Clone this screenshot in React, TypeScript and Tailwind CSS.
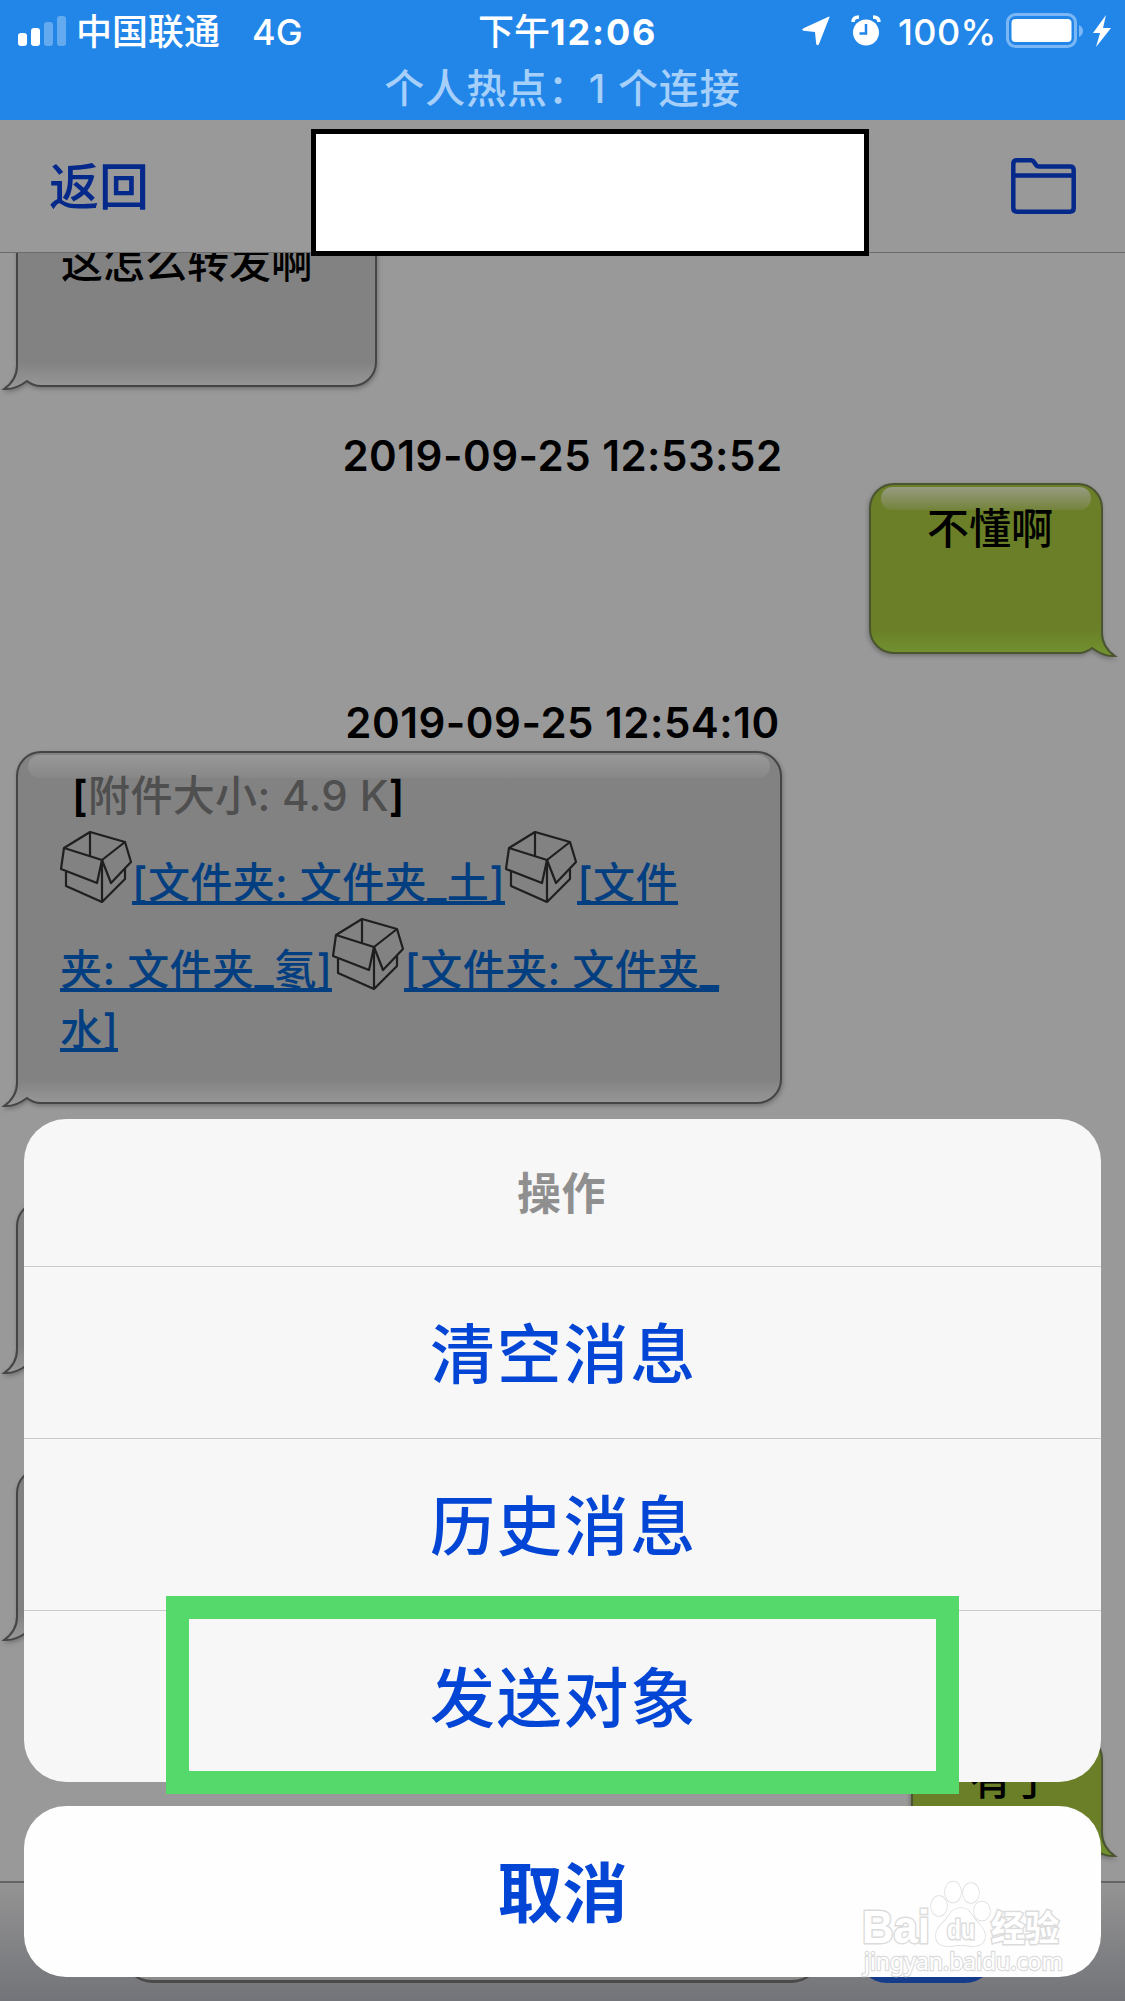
import React from 'react';

interface BubbleProps {
  width: number;
  height: number;
  tone: 'gray' | 'green';
  className?: string;
  children?: React.ReactNode;
}

// Speech bubble with a curled tail at the bottom corner. Incoming messages
// are gray with the tail on the left, outgoing ones green and mirrored.
function Bubble({ width: w, height: h, tone, className = '', children }: BubbleProps) {
  const id = `${tone}-${w}-${h}`;
  const green = tone === 'green';
  const outline = [
    `M38 0H${w - 24}A24 24 0 0 1 ${w} 24V${h - 24}A24 24 0 0 1 ${w - 24} ${h}`,
    `H24Q16 ${h} 10 ${h - 5}Q-2 ${h + 4} -13 ${h + 3}Q0 ${h - 6} 0 ${h - 20}`,
    'V24A24 24 0 0 1 24 0Z',
  ].join('');
  return (
    <div className={`relative shrink-0 ${className}`} style={{ width: w, height: h }}>
      <svg
        width={w}
        height={h}
        className={`absolute inset-0 overflow-visible drop-shadow-[1px_2px_2px_rgba(0,0,0,0.25)] ${green ? '-scale-x-100' : ''}`}
      >
        <defs>
          <linearGradient id={`${id}-body`} gradientUnits="userSpaceOnUse" x1="0" x2="0" y1={h - 24} y2={h}>
            <stop offset="0" stopColor={green ? '#6a7f27' : '#828282'} />
            <stop offset="1" stopColor={green ? '#71912f' : '#969696'} />
          </linearGradient>
          <linearGradient id={`${id}-gloss`} x1="0" x2="0" y1="0" y2="1">
            <stop offset="0" stopColor={green ? '#979a82' : '#989898'} />
            <stop offset="1" stopColor={green ? '#73843a' : '#878787'} />
          </linearGradient>
        </defs>
        <path d={outline} fill={`url(#${id}-body)`} stroke={green ? '#4a5430' : '#454545'} strokeWidth="2" />
        <rect x="11" y="3" width={w - 22} height="23" rx="11.5" fill={`url(#${id}-gloss)`} />
      </svg>
      <div className="relative">{children}</div>
    </div>
  );
}

function BoxIcon() {
  return (
    <svg width="72" height="72" viewBox="0 0 72 72" fill="none" stroke="#1f1f1f" strokeWidth="2.2" strokeLinejoin="round" className="mb-[2px] shrink-0">
      <path d="M30 1 65 11 42 29 4 17Z" />
      <path d="M30 1V25" />
      <path d="M4 17 1 38 37 52 42 29 51 52 71 31 65 11" />
      <path d="M6 41V55L42 71 65 48V38M42 29V71" />
    </svg>
  );
}

function FileLink({ children }: { children: string }) {
  return (
    <a className="block h-[46px] shrink-0 whitespace-pre border-b-4 border-[#033f80] text-[42px] font-medium leading-[48px] tracking-[0.4px] text-[#033f80]">
      {children}
    </a>
  );
}

function StatusBar() {
  return (
    <header className="h-[120px] shrink-0 bg-[#2286e9] text-white">
      <div className="flex h-[62px] items-center pl-[18px] text-[36px] font-medium">
        <div className="flex h-[30px] w-[48px] shrink-0 items-end justify-between">
          <i className="h-[13px] w-[9px] rounded-[3px] bg-white" />
          <i className="h-[18px] w-[9px] rounded-[3px] bg-white" />
          <i className="h-[24px] w-[9px] rounded-[3px] bg-white/30" />
          <i className="h-[30px] w-[9px] rounded-[3px] bg-white/30" />
        </div>
        <span className="ml-[10px] w-[176px] shrink-0 whitespace-nowrap pt-[2px]">中国联通</span>
        <span className="w-[226px] shrink-0 pt-px">4G</span>
        <span className="w-[324px] shrink-0 whitespace-nowrap pt-px">
          下午<b className="font-bold tracking-[1.9px]">12:06</b>
        </span>
        <svg width="29" height="30" viewBox="0 0 29 30" fill="#fff" className="shrink-0">
          <path d="M27.500 1.200 17 28Q15.500 30.500 14.200 28L13 16 1.500 14.800Q-.8 13.500 1.500 12.200L26 1Q28 0 27.500 1.200Z" />
        </svg>
        <svg width="30" height="32" viewBox="0 0 30 32" className="ml-5 shrink-0">
          <circle cx="15" cy="17.500" r="13" fill="#fff" />
          <path d="M2 7Q2 2 8 2M28 7Q28 2 22 2" fill="none" stroke="#fff" strokeWidth="3.500" />
          <path d="M15 9V18.500H8.500" fill="none" stroke="#2286e9" strokeWidth="2.500" />
        </svg>
        <span className="ml-[17px] w-[108px] shrink-0 pt-px tracking-[0.4px]">100%</span>
        <svg width="106" height="36" viewBox="0 0 106 36" className="shrink-0">
          <rect x="1.500" y="1.500" width="68" height="32" rx="8" fill="none" stroke="#7ab7f4" strokeWidth="3" />
          <rect x="5.500" y="6" width="60" height="23" rx="4" fill="#fff" />
          <path d="M73 12Q77 14 77 18T73 24Z" fill="#7ab7f4" />
          <path d="M100 2 87 20H94L90 34 105 15H97Z" fill="#fff" />
        </svg>
      </div>
      <p className="pt-px text-center text-[40px] font-medium leading-[52px] tracking-[0.9px] text-[#a6d0fa]">个人热点：1 个连接</p>
    </header>
  );
}

function NavBar() {
  return (
    <nav className="flex h-[133px] shrink-0 items-center justify-between border-b border-[#6b6b6b] bg-[#999] pl-[49px] pr-[49px] text-[#04298a]">
      <span className="pt-[3px] text-[50px] font-medium">返回</span>
      <svg width="65" height="56" viewBox="0 0 65 56" fill="none" stroke="currentColor" strokeWidth="4.500" strokeLinejoin="round">
        <path d="M2.300 50V6Q2.300 2.300 6 2.300H20Q22 2.300 23 4L25 7Q26 8.500 28 8.500H59Q62.700 8.500 62.700 12V50Q62.700 53.700 59 53.700H6Q2.300 53.700 2.300 50ZM2.300 17.500H62.700" />
      </svg>
    </nav>
  );
}

function Timestamp({ children, className }: { children: string; className: string }) {
  return <time className={`block text-center text-[42px] font-semibold leading-[50px] tracking-[0.5px] text-black ${className}`}>{children}</time>;
}

function Chat() {
  return (
    <main className="flex h-[1628px] shrink-0 flex-col overflow-hidden bg-[#999]">
      <Bubble width={359} height={169} tone="gray" className="-mt-[36px] ml-[17px]">
        <p className="pl-[44px] pt-[16px] text-[42px] font-medium leading-[60px]">这怎么转发啊</p>
      </Bubble>
      <Timestamp className="mt-[45px]">2019-09-25 12:53:52</Timestamp>
      <Bubble width={232} height={169} tone="green" className="mr-[23px] mt-[3px] self-end">
        <p className="pl-[57px] pt-[15px] text-[42px] font-medium leading-[60px]">不懂啊</p>
      </Bubble>
      <Timestamp className="mt-[45px]">2019-09-25 12:54:10</Timestamp>
      <Bubble width={764} height={351} tone="gray" className="ml-[17px] mt-[4px]">
        <div className="pl-[43px]">
          <p className="h-[79px] whitespace-pre pl-[12px] pt-[14px] text-[42px] font-medium leading-[60px] tracking-[0.35px] text-[#4f4f4f]">
            <span className="font-semibold text-black">[</span>附件大小: 4.9 K<span className="font-semibold text-black">]</span>
          </p>
          <div className="flex h-[74px] items-end">
            <BoxIcon />
            <FileLink>[文件夹: 文件夹_土]</FileLink>
            <BoxIcon />
            <FileLink>[文件</FileLink>
          </div>
          <div className="mt-[13px] flex h-[74px] items-end">
            <FileLink>夹: 文件夹_氡]</FileLink>
            <BoxIcon />
            <FileLink>[文件夹: 文件夹_</FileLink>
          </div>
          <div className="mt-[14px] flex">
            <FileLink>水]</FileLink>
          </div>
        </div>
      </Bubble>
      <Bubble width={230} height={168} tone="gray" className="ml-[17px] mt-[99px]" />
      <Bubble width={232} height={168} tone="gray" className="ml-[17px] mt-[99px]" />
      <Bubble width={190} height={118} tone="green" className="mr-[23px] mt-[98px] self-end">
        <p className="pl-[58px] pt-[15px] text-[42px] font-medium leading-[60px]">有了</p>
      </Bubble>
    </main>
  );
}

function Toolbar() {
  return (
    <footer className="flex h-[120px] shrink-0 items-end border-t-2 border-[#646464] bg-linear-to-b from-[#949494] to-[#737479] pb-[18px] pl-[124px]">
      <div className="h-[84px] w-[696px] rounded-[28px] border-b-[3px] border-[#4a4a4a] bg-[#8c8c8c]" />
      <div className="ml-[34px] h-[84px] w-[144px] rounded-[34px] bg-[#143c8a]" />
    </footer>
  );
}

const actions = ['清空消息', '历史消息', '发送对象'];

function ActionSheet() {
  return (
    <section className="absolute inset-x-[24px] bottom-[24px] text-center">
      <div className="overflow-hidden rounded-[42px] bg-[#f7f7f7]">
        <h2 className="h-[147px] pr-[2px] text-[44px] font-semibold leading-[150px] tracking-[0.500px] text-[#8f8f8f]">操作</h2>
        {actions.map((label) => (
          <button key={label} type="button" className="block h-[172px] w-full border-t border-[#cbcbcd] pl-[2px] pt-[2px] text-[65px] font-medium leading-[172px] tracking-[1.800px] text-[#0345d4]">
            {label}
          </button>
        ))}
      </div>
      <button type="button" className="mt-6 block h-[171px] w-full rounded-[42px] bg-[#fefefe] pt-[2px] text-[65px] font-bold leading-[172px] text-[#0345d4]">
        取消
      </button>
    </section>
  );
}

function Watermark() {
  return (
    <svg
      width="206"
      height="102"
      viewBox="0 0 206 102"
      fill="#fff"
      stroke="#dcdcdc"
      strokeWidth="1.500"
      className="absolute bottom-[20px] right-[59px] font-['Liberation_Sans','Noto_Sans_CJK_SC',sans-serif] [paint-order:stroke]"
    >
      <text x="2" y="64" fontSize="46" fontWeight="700" strokeWidth="3" textLength="68" lengthAdjust="spacingAndGlyphs">Bai</text>
      <ellipse cx="79" cy="27" rx="8" ry="10" />
      <ellipse cx="93" cy="13" rx="8" ry="10.500" />
      <ellipse cx="111" cy="14" rx="8" ry="10" />
      <ellipse cx="122" cy="32" rx="8" ry="9.500" />
      <path d="M101 29C94 29 91 33 87 39S76 48 76 57C76 64 81 67 88 67 95 67 96 66 101 66S107 67 114 67C121 67 125 63 125 57 125 49 118 45 114 39S108 29 101 29Z" />
      <text x="87" y="60" fontSize="27" fontWeight="700" strokeWidth="3" textLength="28" lengthAdjust="spacingAndGlyphs">du</text>
      <text x="131" y="62" fontSize="35" fontWeight="700" strokeWidth="3" textLength="68" lengthAdjust="spacingAndGlyphs">经验</text>
      <text x="4" y="91" fontSize="24" strokeWidth="2.500" textLength="199" lengthAdjust="spacingAndGlyphs" className="font-['Noto_Sans']">jingyan.baidu.com</text>
    </svg>
  );
}

export default function App() {
  return (
    <div className="relative flex h-[2001px] w-[1125px] flex-col overflow-hidden font-[Inter,'Noto_Sans_CJK_SC',sans-serif]">
      <StatusBar />
      <NavBar />
      <Chat />
      <Toolbar />
      <ActionSheet />
      {/* blanked-out chat title */}
      <div className="absolute left-[311px] top-[129px] h-[127px] w-[558px] border-[5px] border-black bg-white" />
      {/* highlight around the last action */}
      <div className="absolute left-[166px] top-[1596px] h-[198px] w-[793px] border-[23px] border-[#55d96b]" />
      <Watermark />
    </div>
  );
}
